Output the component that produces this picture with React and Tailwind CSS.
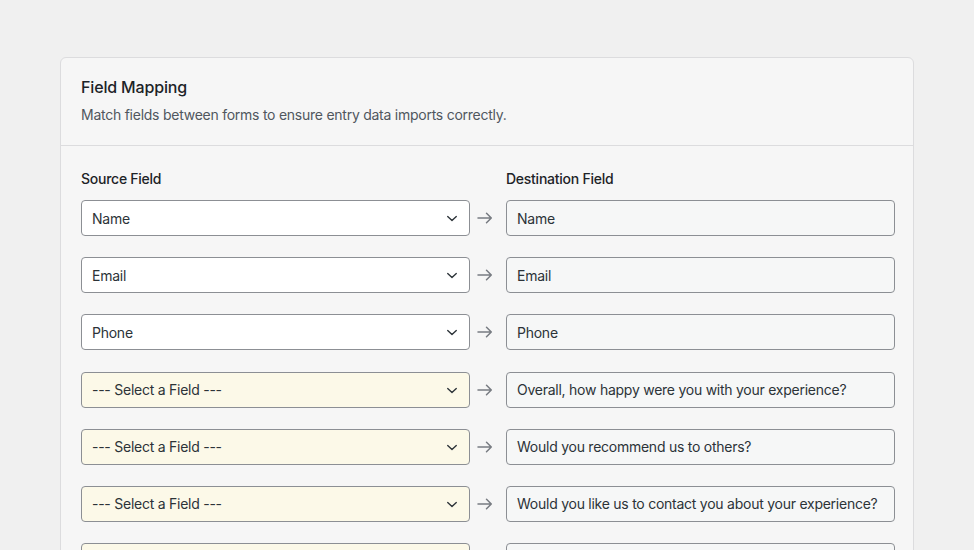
// App.jsx — Field mapping panel

const ROWS = [
  { source: "Name", dest: "Name" },
  { source: "Email", dest: "Email" },
  { source: "Phone", dest: "Phone" },
  { source: null, dest: "Overall, how happy were you with your experience?" },
  { source: null, dest: "Would you recommend us to others?" },
  { source: null, dest: "Would you like us to contact you about your experience?" },
  { source: null, dest: "" },
];

function Chevron() {
  return (
    <svg width="12" height="12" viewBox="0 0 12 12" fill="none" className="flex-shrink-0">
      <path d="M1.7 4.6 6 8.5l4.3-3.9" stroke="#2c3338" strokeWidth="1.4" strokeLinecap="round" strokeLinejoin="round" />
    </svg>
  );
}

function Arrow() {
  return (
    <svg width="16" height="16" viewBox="0 0 16 16" fill="none">
      <path d="M1 8h13.3M9.5 3.2 14.3 8l-4.8 4.8" stroke="#787c82" strokeWidth="1.5" strokeLinecap="round" strokeLinejoin="round" />
    </svg>
  );
}

function MappingRow({ row }) {
  const empty = !row.source;
  return (
    <div className="grid grid-cols-[389px_36px_389px] items-center">
      {/* Campo de origen (select) */}
      <div
        className={`h-[36px] rounded-[4px] border border-[#8c8f94] flex items-center justify-between pl-[10px] pr-[11px] text-[14px] tracking-[-0.018em] text-[#2c3338] ${
          empty ? "bg-[#fcf9e8]" : "bg-white"
        }`}
      >
        <span>{empty ? "--- Select a Field ---" : row.source}</span>
        <Chevron />
      </div>
      <div className="flex justify-start pl-[7px]">
        <Arrow />
      </div>
      {/* Campo de destino (solo lectura) */}
      <div className="h-[36px] rounded-[4px] border border-[#8c8f94] bg-[#f6f7f7] flex items-center px-[10px] text-[14px] tracking-[-0.018em] text-[#2c3338] truncate">
        {row.dest}
      </div>
    </div>
  );
}

export default function App() {
  return (
    <div
      className="min-h-screen bg-[#f0f0f0] pt-[57px] pl-[60px] overflow-hidden"
      style={{ fontFamily: 'Inter, "Liberation Sans", Arial, sans-serif' }}
    >
      <div className="w-[854px] h-[520px] bg-[#f6f6f6] border border-[#dcdcde] rounded-[6px] overflow-hidden">
        {/* Cabecera */}
        <div className="pl-5 pr-[18px] pt-[17px] pb-[20px] border-b border-[#dcdcde]">
          <h2 className="text-[16px] leading-[24px] font-medium tracking-[-0.01em] text-[#1d2327]">Field Mapping</h2>
          <p className="mt-[6px] text-[14px] leading-[20px] tracking-[-0.018em] text-[#50575e]">
            Match fields between forms to ensure entry data imports correctly.
          </p>
        </div>

        {/* Cuerpo */}
        <div className="pl-5 pr-[18px] pt-[23px]">
          <div className="grid grid-cols-[389px_36px_389px] text-[14px] leading-[20px] font-medium tracking-[-0.018em] text-[#1d2327]">
            <span>Source Field</span>
            <span />
            <span>Destination Field</span>
          </div>
          <div className="mt-[11px] flex flex-col gap-[21.2px]">
            {ROWS.map((row, i) => (
              <MappingRow key={i} row={row} />
            ))}
          </div>
        </div>
      </div>
    </div>
  );
}
